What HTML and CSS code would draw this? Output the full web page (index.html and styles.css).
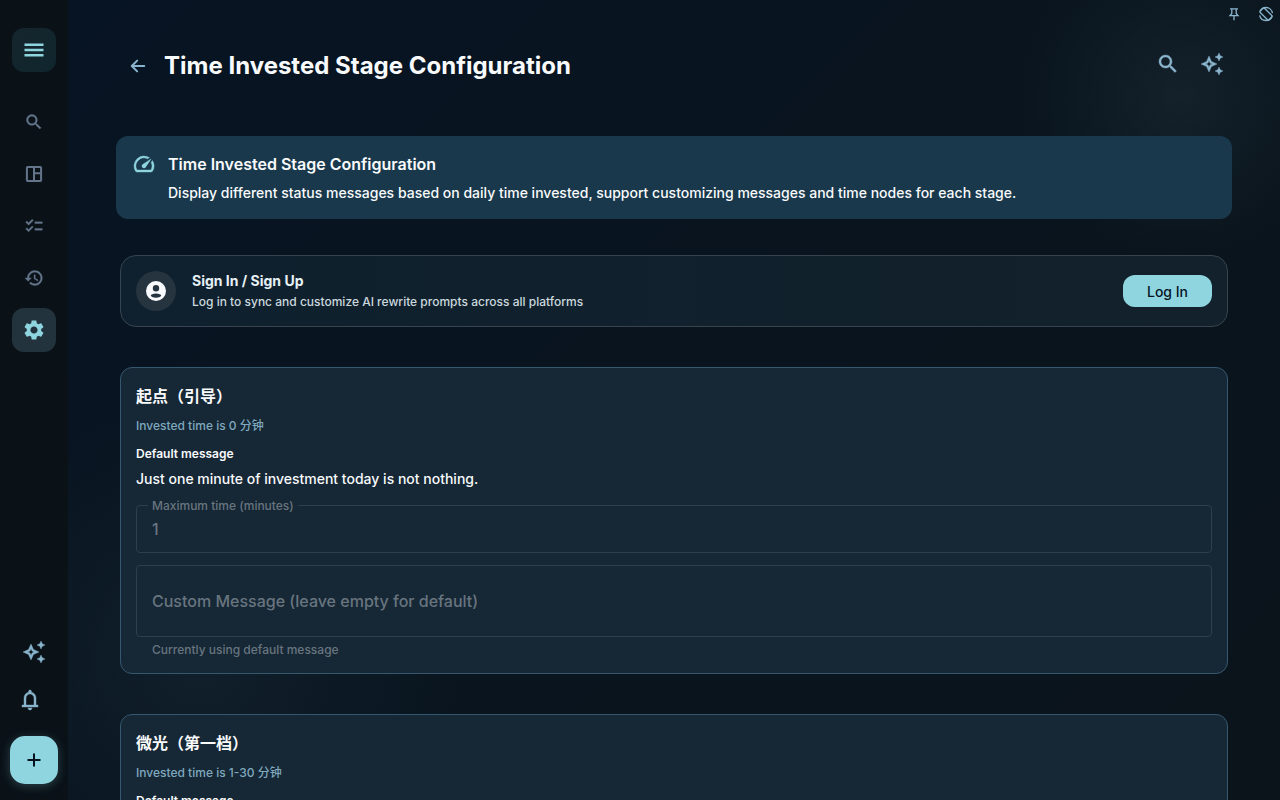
FILE: index.html
```html
<!DOCTYPE html>
<html lang="en">

<head>
    <meta charset="UTF-8">
    <meta name="viewport" content="width=device-width, initial-scale=1">
    <title>Time Invested Stage Configuration</title>
    <link rel="stylesheet" href="styles.css">
</head>

<body>
    <!-- shared icon shapes -->
    <svg class="sprite" aria-hidden="true">
        <symbol id="i-search" viewBox="0 0 24 24">
            <path d="M15.5 14h-.79l-.28-.27C15.41 12.59 16 11.11 16 9.5 16 5.91 13.09 3 9.5 3S3 5.91 3 9.5 5.91 16 9.5 16c1.61 0 3.09-.59 4.23-1.57l.27.28v.79l5 4.99L20.49 19l-4.99-5zm-6 0C7.01 14 5 11.99 5 9.5S7.01 5 9.5 5 14 7.01 14 9.5 11.99 14 9.5 14z" />
        </symbol>
        <symbol id="i-sparkle" viewBox="0 0 24 24">
            <path d="M19 9l1.25-2.75L23 5l-2.75-1.25L19 1l-1.25 2.75L15 5l2.75 1.25zm0 6l-1.25 2.75L15 19l2.75 1.25L19 23l1.25-2.75L23 19l-2.75-1.25zM11.5 9.5L9 4 6.5 9.5 1 12l5.5 2.5L9 20l2.5-5.5L17 12zm-1.51 3.49L9 15.17l-.99-2.18L5.83 12l2.18-.99L9 8.83l.99 2.18 2.18.99z" />
        </symbol>
    </svg>

    <div class="app">
        <nav class="sidebar" aria-label="Main">
            <button class="side-btn menu-btn" type="button" aria-label="Menu">
                <svg class="icon" viewBox="0 0 24 24"><path d="M2.500 5.400h19v2.500h-19zm0 5.300h19v2.500h-19zm0 5.300h19v2.500h-19z" /></svg>
            </button>
            <div class="side-list">
                <button class="side-btn" type="button" aria-label="Search">
                    <svg class="icon-sm semi"><use href="#i-search" /></svg>
                </button>
                <button class="side-btn" type="button" aria-label="Dashboard">
                    <svg class="icon-sm line" viewBox="0 0 24 24">
                        <rect x="3.500" y="3.500" width="17" height="17" rx="1" />
                        <path d="M12 3.500v17M12 11h8.500" />
                    </svg>
                </button>
                <button class="side-btn" type="button" aria-label="Tasks">
                    <svg class="icon-sm semi" viewBox="0 0 24 24"><path d="M22 7h-9v2h9V7zm0 8h-9v2h9v-2zM5.54 11L2 7.46l1.41-1.41 2.12 2.12 4.24-4.24 1.41 1.41L5.54 11zm0 8L2 15.46l1.41-1.41 2.12 2.12 4.24-4.24 1.41 1.41L5.54 19z" /></svg>
                </button>
                <button class="side-btn" type="button" aria-label="History">
                    <svg class="icon-sm semi" viewBox="0 0 24 24"><path d="M13 3c-4.970 0-9 4.030-9 9H1l3.890 3.890.07.14L9 12H6c0-3.870 3.130-7 7-7s7 3.130 7 7-3.130 7-7 7c-1.930 0-3.680-.79-4.940-2.060l-1.420 1.420C8.270 19.990 10.510 21 13 21c4.970 0 9-4.030 9-9s-4.030-9-9-9zm-1 5v5l4.280 2.540.72-1.210-3.500-2.080V8H12z" /></svg>
                </button>
                <button class="side-btn active" type="button" aria-label="Settings">
                    <svg class="icon" viewBox="0 0 24 24"><path d="M19.140 12.940c.04-.3.06-.61.06-.94 0-.32-.02-.64-.07-.94l2.030-1.580c.18-.14.23-.41.12-.61l-1.920-3.320c-.12-.22-.37-.29-.59-.22l-2.390.96c-.5-.38-1.030-.7-1.620-.94l-.36-2.540c-.04-.24-.24-.41-.48-.41h-3.840c-.24 0-.43.17-.47.41l-.36 2.540c-.59.24-1.130.57-1.620.94l-2.390-.96c-.22-.08-.47 0-.59.22L2.740 8.870c-.12.21-.08.47.12.61l2.030 1.580c-.05.3-.09.63-.09.94s.02.64.07.94l-2.030 1.580c-.18.14-.23.41-.12.61l1.920 3.320c.12.22.37.29.59.22l2.390-.96c.5.38 1.030.7 1.620.94l.36 2.540c.05.24.24.41.48.41h3.840c.24 0 .44-.17.47-.41l.36-2.540c.59-.24 1.130-.56 1.620-.94l2.390.96c.22.08.47 0 .59-.22l1.920-3.320c.12-.22.07-.47-.12-.61l-2.010-1.580zM12 15.600c-1.980 0-3.600-1.620-3.600-3.600s1.620-3.600 3.600-3.600 3.600 1.620 3.600 3.600-1.620 3.600-3.600 3.600z" /></svg>
                </button>
            </div>
            <div class="side-bottom">
                <button class="tool-btn" type="button" aria-label="AI assistant">
                    <svg class="icon semi"><use href="#i-sparkle" /></svg>
                </button>
                <button class="tool-btn bell" type="button" aria-label="Notifications">
                    <svg class="icon semi" viewBox="0 0 24 24"><path d="M4 19v-2h2v-7c0-1.380.42-2.600 1.250-3.680S9.170 4.550 10.500 4.200v-.7c0-.42.15-.77.44-1.060S11.580 2 12 2s.77.15 1.060.44.44.64.44 1.060v.7c1.330.35 2.420 1.050 3.250 2.120S18 8.620 18 10v7h2v2H4zm8 3c-.55 0-1.020-.2-1.410-.59S10 20.550 10 20h4c0 .55-.2 1.020-.59 1.410S12.550 22 12 22zm-4-5h8v-7c0-1.100-.39-2.040-1.180-2.820S13.100 6 12 6s-2.040.39-2.820 1.180S8 8.900 8 10v7z" /></svg>
                </button>
                <button class="fab" type="button" aria-label="Add">
                    <svg class="icon" viewBox="0 0 24 24"><path d="M18.500 13H13v5.500h-2V13H5.500v-2H11V5.500h2V11h5.500z" /></svg>
                </button>
            </div>
        </nav>

        <main class="main">
            <div class="window-tools">
                <button class="mini-btn" type="button" aria-label="Pin window">
                    <svg class="icon-xs" viewBox="0 0 16 16"><path class="thin" d="M4 2.800h8M5.800 2.800v4.700L4 9.600h8l-1.800-2.100V2.800M8 9.500v4.800" /></svg>
                </button>
                <button class="mini-btn" type="button" aria-label="Rotate window">
                    <svg class="icon-xs" viewBox="0 0 16 16">
                        <circle class="thin" cx="8" cy="8" r="6.500" stroke-dasharray="16 4.420" stroke-dashoffset="-2.500" />
                        <rect class="thin" x="5" y="1.800" width="6" height="12.400" rx="1" transform="rotate(-45 8 8)" />
                    </svg>
                </button>
            </div>

            <header class="page-head">
                <div class="head-title">
                    <button class="tool-btn" type="button" aria-label="Back">
                        <svg class="icon-sm line" viewBox="0 0 24 24"><path d="M19.500 12H5M11 5.500L4.500 12l6.500 6.500" stroke-linecap="round" stroke-linejoin="round" /></svg>
                    </button>
                    <h1>Time Invested Stage Configuration</h1>
                </div>
                <div class="head-actions">
                    <button class="tool-btn" type="button" aria-label="Search page">
                        <svg class="icon semi"><use href="#i-search" /></svg>
                    </button>
                    <button class="tool-btn" type="button" aria-label="AI rewrite">
                        <svg class="icon semi"><use href="#i-sparkle" /></svg>
                    </button>
                </div>
            </header>

            <section class="banner">
                <svg class="icon semi" viewBox="0 0 24 24"><path d="M20.380 8.570l-1.230 1.850a8 8 0 0 1-.22 7.580H5.070A8 8 0 0 1 15.580 6.850l1.850-1.230A10 10 0 0 0 3.350 19a2 2 0 0 0 1.720 1h13.850a2 2 0 0 0 1.740-1 10 10 0 0 0-.27-10.440zm-9.790 6.840a2 2 0 0 0 2.830 0l5.660-8.490-8.490 5.660a2 2 0 0 0 0 2.830z" /></svg>
                <div>
                    <h2>Time Invested Stage Configuration</h2>
                    <p>Display different status messages based on daily time invested, support customizing messages and time nodes for each stage.</p>
                </div>
            </section>

            <section class="sign-card">
                <div class="avatar">
                    <svg class="icon" viewBox="0 0 24 24"><path fill-rule="evenodd" d="M12 2a10 10 0 1 0 0 20 10 10 0 0 0 0-20zm0 4a3.200 3.200 0 1 1 0 6.400A3.200 3.200 0 0 1 12 6zm0 8.400c2.900 0 5.200 1 5.200 2.200s-2.300 2.200-5.200 2.200-5.200-1-5.200-2.200 2.300-2.200 5.200-2.200z" /></svg>
                </div>
                <div class="sign-text">
                    <h3>Sign In / Sign Up</h3>
                    <p>Log in to sync and customize AI rewrite prompts across all platforms</p>
                </div>
                <button class="login" type="button">Log In</button>
            </section>

            <section class="stage">
                <h3 lang="zh-CN">起点（引导）</h3>
                <p class="range">Invested time is 0 分钟</p>
                <p class="caption">Default message</p>
                <p class="message">Just one minute of investment today is not nothing.</p>
                <div class="field">
                    <label for="max-time-0">Maximum time (minutes)</label>
                    <input id="max-time-0" type="text" value="1" disabled>
                </div>
                <textarea class="custom" aria-label="Custom Message" aria-describedby="help-0" placeholder="Custom Message (leave empty for default)" disabled></textarea>
                <p class="helper" id="help-0">Currently using default message</p>
            </section>

            <section class="stage">
                <h3 lang="zh-CN">微光（第一档）</h3>
                <p class="range">Invested time is 1-30 分钟</p>
                <p class="caption">Default message</p>
            </section>
        </main>
    </div>
</body>

</html>
```
FILE: styles.css
```css
* {
    box-sizing: border-box;
}

body {
    margin: 0;
    background: #09131d;
    color: #f8fafc;
    font-family: Inter, "Noto Sans CJK SC", sans-serif;
    font-size: 14px;
    font-weight: 500;
}

h1, h2, h3, p {
    margin: 0;
}

button {
    display: flex;
    align-items: center;
    justify-content: center;
    padding: 0;
    border: none;
    background: none;
    color: inherit;
    font-family: inherit;
    cursor: pointer;
}

svg {
    display: block;
    flex: none;
    fill: currentColor;
}

.sprite {
    position: absolute;
    width: 0;
    height: 0;
}

.icon {
    width: 24px;
    height: 24px;
}

.icon-sm {
    width: 20px;
    height: 20px;
}

.icon-xs {
    width: 16px;
    height: 16px;
}

.line {
    fill: none;
    stroke: currentColor;
    stroke-width: 2.4;
}

.thin {
    fill: none;
    stroke: currentColor;
    stroke-width: 1.3;
}

.semi {
    stroke: currentColor;
    stroke-width: 0.4;
}

.app {
    display: flex;
    height: 100vh;
    overflow: hidden;
}

/* sidebar */
.sidebar {
    flex: none;
    display: flex;
    flex-direction: column;
    align-items: center;
    width: 68px;
    padding: 28px 1px 16px 0;
    background: #0a1218;
}

.side-btn {
    width: 44px;
    height: 44px;
    border-radius: 12px;
    color: #64748b;
}

.menu-btn {
    background: linear-gradient(135deg, #16252d, #0f262d);
    color: #8fd5e0;
}

.side-list {
    display: flex;
    flex-direction: column;
    gap: 8px;
    margin-top: 28px;
}

.side-btn.active {
    background: #22333d;
    color: #8fd5e0;
}

.side-bottom {
    display: flex;
    flex-direction: column;
    align-items: center;
    gap: 8px;
    margin-top: auto;
}

.tool-btn {
    width: 40px;
    height: 40px;
    color: #89b4cc;
}

.bell {
    padding-right: 8px;
}

.fab {
    width: 48px;
    height: 48px;
    margin-top: 8px;
    border-radius: 15px;
    background: #8fd5e0;
    color: #06131f;
    box-shadow: 0 2px 10px rgba(143, 213, 224, 0.25);
}

/* content */
.main {
    position: relative;
    flex: 1;
    min-width: 0;
    overflow: hidden;
    padding: 40px 48px 0;
    background:
        radial-gradient(circle at 1112px 96px, rgba(40, 58, 66, 0.35), transparent 160px),
        radial-gradient(circle at 132px 660px, rgba(34, 58, 72, 0.3), transparent 260px),
        linear-gradient(135deg, #071423, #09141e 50%, #0b141b);
}

.window-tools {
    position: absolute;
    top: 6px;
    right: 6px;
    display: flex;
    gap: 16px;
    color: #89b4cc;
}

.page-head {
    display: flex;
    align-items: center;
    justify-content: space-between;
    min-height: 48px;
    margin-bottom: 48px;
    padding-left: 2px;
}

.head-title {
    display: flex;
    align-items: center;
    gap: 6px;
    padding-top: 4px;
}

.page-head h1 {
    font-size: 24px;
    font-weight: 700;
    line-height: 32px;
}

.head-actions {
    display: flex;
    gap: 4px;
}

.banner {
    display: flex;
    gap: 12px;
    padding: 16px;
    border-radius: 12px;
    background: #19384b;
}

.banner .icon {
    color: #8fd5e0;
}

.banner h2 {
    margin-bottom: 6px;
    font-size: 16px;
    font-weight: 600;
    line-height: 24px;
}

.banner p {
    line-height: 21px;
}

.sign-card {
    display: flex;
    align-items: center;
    gap: 16px;
    margin: 36px 4px 40px;
    padding: 14px 15px;
    border: 1px solid #36444f;
    border-radius: 16px;
    background: linear-gradient(90deg, #0f202e, #12212b);
}

.avatar {
    display: flex;
    align-items: center;
    justify-content: center;
    width: 40px;
    height: 40px;
    border-radius: 50%;
    background: #263440;
}

.sign-text {
    flex: 1;
}

.sign-text h3 {
    font-size: 14px;
    font-weight: 700;
    line-height: 22px;
    color: #e6f1f5;
}

.sign-text p {
    font-size: 12px;
    line-height: 20px;
    color: #cbd9de;
}

.login {
    height: 32px;
    padding: 0 24px;
    border-radius: 12px;
    background: #8fd5e0;
    color: #06131f;
    font-size: 14px;
    font-weight: 500;
}

.stage {
    margin: 0 4px 40px;
    padding: 16px 15px 15px;
    border: 1px solid #35586e;
    border-radius: 12px;
    background: #162735;
}

.stage h3 {
    font-size: 16px;
    font-weight: 700;
    line-height: 24px;
}

.range {
    margin-top: 8px;
    font-size: 12px;
    line-height: 20px;
    color: #7fa9bf;
}

.caption {
    margin-top: 8px;
    font-size: 12px;
    font-weight: 600;
    line-height: 20px;
}

.message {
    margin-top: 4px;
    line-height: 22px;
}

.field {
    position: relative;
    margin-top: 15px;
}

.field label {
    position: absolute;
    top: -7px;
    left: 12px;
    padding: 0 4px;
    background: #162735;
    font-size: 12px;
    line-height: 16px;
    color: #68757f;
}

.field input,
.custom {
    display: block;
    width: 100%;
    padding: 0 15px;
    border: 1px solid #2d3f4b;
    border-radius: 4px;
    background: transparent;
    color: #68757f;
    font-family: inherit;
    font-size: 16px;
    font-weight: 500;
}

.field input {
    height: 48px;
}

.custom {
    height: 72px;
    margin-top: 12px;
    padding: 23px 15px;
    line-height: 24px;
    resize: none;
}

.custom::placeholder {
    color: #68757f;
}

.helper {
    margin-top: 5px;
    padding: 0 16px;
    font-size: 12px;
    line-height: 16px;
    color: #68757f;
}
```
